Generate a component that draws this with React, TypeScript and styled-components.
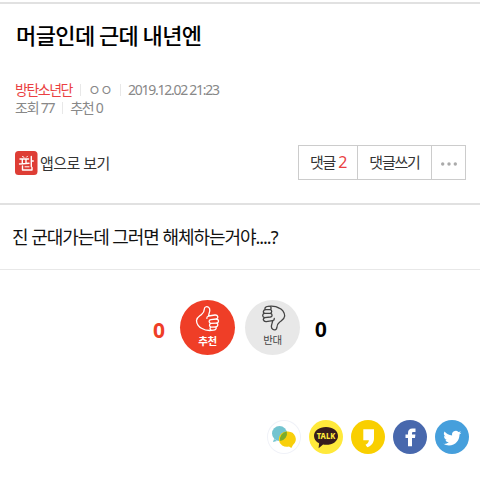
import React from 'react';
import styled, { createGlobalStyle } from 'styled-components';

const GlobalStyle = createGlobalStyle`
  * {
    box-sizing: border-box;
  }

  body {
    margin: 0;
    background-color: #fff;
    font-family: "Noto Sans", "Noto Sans CJK KR", sans-serif;
    color: #222;
  }
`;

const Page = styled.main`
  height: 478px;
  padding-top: 2px;
  overflow: hidden;
`;

const Header = styled.header`
  height: 203px;
  padding: 15px 14px 0 15px;
  border-top: 2px solid #e1e1e1;
  border-bottom: 2px solid #e1e1e1;
`;

const Title = styled.h1`
  margin: 0 0 0 1px;
  height: 62px;
  font-size: 22px;
  line-height: 30px;
  font-weight: 500;
  font-family: "Noto Sans CJK KR", sans-serif;
  letter-spacing: -0.6px;
  color: #000;
`;

const Meta = styled.div`
  display: flex;
  align-items: center;
  height: 18px;
  font-size: 14px;
  line-height: 18px;
  letter-spacing: -1.2px;
  color: #888;
`;

const MetaItem = styled.span<{ $accent?: boolean; $spacing?: number }>`
  display: flex;
  align-items: center;
  color: ${props => props.$accent ? '#ea3f42' : 'inherit'};
  letter-spacing: ${props => props.$spacing ?? -1.25}px;

  &:not(:first-child)::before {
    content: '';
    width: 1px;
    height: 12px;
    margin: 0 7px 0 8px;
    background-color: #e8e8e8;
  }
`;

const Toolbar = styled.div`
  display: flex;
  justify-content: space-between;
  align-items: center;
  height: 35px;
  margin-top: 28px;
`;

const AppLink = styled.a`
  display: flex;
  align-items: center;
  gap: 2px;
  font-size: 15px;
  letter-spacing: -0.5px;
  line-height: 24px;
  color: #333;
`;

const ButtonGroup = styled.div`
  display: flex;
  height: 35px;
  border: 1px solid #ccc;
`;

const Button = styled.button<{ $width: number }>`
  display: flex;
  align-items: center;
  justify-content: center;
  width: ${props => props.$width}px;
  padding: 0 0 2px;
  border: none;
  background: none;
  font: 15px "Noto Sans", "Noto Sans CJK KR", sans-serif;
  letter-spacing: -1.2px;
  color: #333;

  &:not(:first-child) {
    border-left: 1px solid #ccc;
  }
`;

const Count = styled.span`
  margin-left: 3px;
  font-size: 16px;
  color: #ea3f42;
`;

const Content = styled.p`
  margin: 0;
  height: 65px;
  padding: 18px 12px;
  border-bottom: 1px solid #e8e8e8;
  font-size: 18px;
  line-height: 28px;
  letter-spacing: -1.05px;
  color: #111;
`;

const Votes = styled.div`
  display: flex;
  align-items: center;
  justify-content: center;
  gap: 10px;
  height: 55px;
  margin-top: 30px;
`;

const VoteCount = styled.span<{ $up?: boolean }>`
  width: 17px;
  padding-top: 5px;
  text-align: ${props => props.$up ? 'left' : 'right'};
  font-family: ${props => props.$up ? '"Noto Sans"' : '"Liberation Sans"'}, sans-serif;
  font-size: ${props => props.$up ? 21 : 22}px;
  font-weight: 700;
  color: ${props => props.$up ? '#ef3e27' : '#000'};
`;

const VoteButton = styled.button<{ $up?: boolean }>`
  display: flex;
  flex-direction: column;
  align-items: center;
  width: 55px;
  height: 55px;
  padding: ${props => props.$up ? 4 : 3}px 0 0;
  border: none;
  border-radius: 50%;
  background-color: ${props => props.$up ? '#ef3e27' : '#e8e8e8'};
  font: ${props => props.$up ? 700 : 400} 10.5px/18px "Noto Sans CJK KR", sans-serif;
  letter-spacing: -0.3px;
  color: ${props => props.$up ? '#fff' : '#444'};
`;

const Shares = styled.div`
  display: flex;
  justify-content: flex-end;
  gap: 8px;
  margin-top: 65px;
  padding-right: 11px;
`;

const ShareButton = styled.a<{ $color: string; $outlined?: boolean }>`
  display: flex;
  width: 34px;
  height: 34px;
  border-radius: 50%;
  background-color: ${props => props.$color};
  box-shadow: ${props => props.$outlined ? 'inset 0 0 0 1px #f0f2f8' : 'none'};
`;

const TalkIcon = styled.svg`
  font-family: "Noto Sans", sans-serif;
  font-size: 8.5px;
  font-weight: 800;
`;

const PannIcon = () => (
  <svg width="23" height="24" viewBox="0 0 23 24" fill="none">
    <rect width="22.5" height="24" rx="3.5" fill="#de3d35" />
    <g stroke="#fff" strokeWidth="1.4" strokeLinecap="round" strokeLinejoin="round">
      <path d="M5 8h8.500M7.300 8v4.500M11 8v4.500M4.500 13l9.500-.7M16.300 5.500v10M16.300 10h2M7.500 15v4h9.500v-2.500" />
      <path d="M7.500 5.600l1.500.7M12.500 5.200l-1 1M10 15.800h4" strokeWidth="1" />
    </g>
  </svg>
);

const Thumb = ({ down }: { down?: boolean }) => (
  <svg width="27" height="28" viewBox="4 2 27 28" fill="none" stroke="currentColor" strokeWidth="1.3" strokeLinecap="round" strokeLinejoin="round">
    <g transform={down ? 'rotate(180 18.100 16.800)' : undefined}>
      <path d="M15.500 5C17.500 4 20 5.500 19.800 8.500C19.600 10.500 18.700 12 18.500 14L25 13C28 12.800 28.800 16 26.500 17C29.300 17.500 29 20.700 26.800 21.200C28.500 22 28 24.500 26 25C26.800 26.600 25.500 28 23.500 28.200C19.500 28.800 15 28.500 12 26.500C9 25.500 6.500 22 6.500 18.500C6.600 15.500 9.500 14.200 11.500 12.500C13.600 10.800 14.300 9 14.300 7.200C14.400 6 14.800 5.300 15.500 5z" />
      <path d="M18.500 14c-1.300.4-1.800 1.200-1.600 2.300M26.500 17l-5.700.6c-2.300.5-2.200 3.200 0 3.700M26.800 21.200l-6 .2c-1.800.6-1.700 3 0 3.500M26 25l-5 .1c-1.300.6-1.200 2.400 0 3" />
    </g>
  </svg>
);

const App: React.FC = () => (
  <>
    <GlobalStyle />
    <Page>
      <Header>
        <Title>머글인데 근데 내년엔</Title>
        <Meta>
          <MetaItem $accent $spacing={-1.5}>방탄소년단</MetaItem>
          <MetaItem $spacing={-0.9}>ㅇㅇ</MetaItem>
          <MetaItem>2019.12.02 21:23</MetaItem>
        </Meta>
        <Meta>
          <MetaItem>조회 77</MetaItem>
          <MetaItem>추천 0</MetaItem>
        </Meta>
        <Toolbar>
          <AppLink>
            <PannIcon />
            앱으로 보기
          </AppLink>
          <ButtonGroup>
            <Button $width={58}>댓글<Count>2</Count></Button>
            <Button $width={74}>댓글쓰기</Button>
            <Button $width={34} aria-label="더보기">
              <svg width="18" height="8" viewBox="0 0 18 8" fill="#aaa">
                <circle cx="2.7" cy="6" r="1.7" />
                <circle cx="9" cy="6" r="1.7" />
                <circle cx="15.3" cy="6" r="1.7" />
              </svg>
            </Button>
          </ButtonGroup>
        </Toolbar>
      </Header>
      <Content>진 군대가는데 그러면 해체하는거야....?</Content>
      <Votes>
        <VoteCount $up>0</VoteCount>
        <VoteButton $up>
          <Thumb />
          추천
        </VoteButton>
        <VoteButton>
          <Thumb down />
          반대
        </VoteButton>
        <VoteCount>0</VoteCount>
      </Votes>
      <Shares>
        <ShareButton $color="#fff" $outlined>
          <svg width="34" height="34" viewBox="0 0 34 34">
            <circle cx="12.5" cy="13.5" r="7.5" fill="#73c4d0" />
            <path d="M7 19l-1 3 4-1z" fill="#73c4d0" />
            <path d="M21 11.5a8 7.7 0 0 1 5 13.5l-1.7 3-2.3-1.5a8 7.7 0 1 1-1-15z" fill="#f8cf0b" />
            <path d="M19.8 11.6a7.5 7.5 0 0 1-6.6 9.3 8 7.7 0 0 1 6.6-9.3z" fill="#7cab2b" />
          </svg>
        </ShareButton>
        <ShareButton $color="#ffe93b">
          <TalkIcon width="34" height="34" viewBox="0 0 34 34">
            <path d="M17 7c6.800 0 12 3.700 12 8.900S23.800 24.800 17 24.800c-1 0-2-.1-2.900-.3L9.600 28.300l.5-5C7 21.800 5 19.200 5 15.900 5 10.700 10.200 7 17 7z" fill="#371c1d" />
            <text x="17" y="19.3" textAnchor="middle" textLength="18.5" lengthAdjust="spacingAndGlyphs" fill="#ffe93b">TALK</text>
          </TalkIcon>
        </ShareButton>
        <ShareButton $color="#f9cf00">
          <svg width="34" height="34" viewBox="0 0 34 34">
            <path d="M12.300 9.300h10.700v9c0 4.500-2.700 7.700-6.700 9l-1.800-2.600c2-.9 3.200-2.300 3.400-4.400h-5.600z" fill="#fff" />
          </svg>
        </ShareButton>
        <ShareButton $color="#4868ad">
          <svg width="34" height="34" viewBox="0 0 34 34">
            <path d="M15 26.300v-8.300h-2.500v-3.500H15v-1.500c0-3 1.600-4.500 4.300-4.500h3.200v3.400h-2.100c-1 0-1.400.4-1.400 1.300v1.300h3.400l-.4 3.500h-3v8.300z" fill="#fff" />
          </svg>
        </ShareButton>
        <ShareButton $color="#469fdc">
          <svg width="34" height="34" viewBox="0 0 34 34">
            <path transform="translate(8.300 9.200) scale(.75)" d="M23.953 4.570a10 10 0 0 1-2.825.775 4.958 4.958 0 0 0 2.163-2.723 10 10 0 0 1-3.127 1.184 4.920 4.920 0 0 0-8.384 4.482C7.690 8.095 4.067 6.130 1.640 3.162a4.822 4.822 0 0 0 1.523 6.574 4.903 4.903 0 0 1-2.228-.616v.060a4.923 4.923 0 0 0 3.946 4.827 5 5 0 0 1-2.212.085 4.936 4.936 0 0 0 4.604 3.417 9.867 9.867 0 0 1-6.102 2.105c-.39 0-.779-.023-1.170-.067a13.995 13.995 0 0 0 7.557 2.209c9.053 0 13.998-7.496 13.998-13.985l-.015-.630a9.935 9.935 0 0 0 2.460-2.548z" fill="#fff" />
          </svg>
        </ShareButton>
      </Shares>
    </Page>
  </>
);

export default App;
